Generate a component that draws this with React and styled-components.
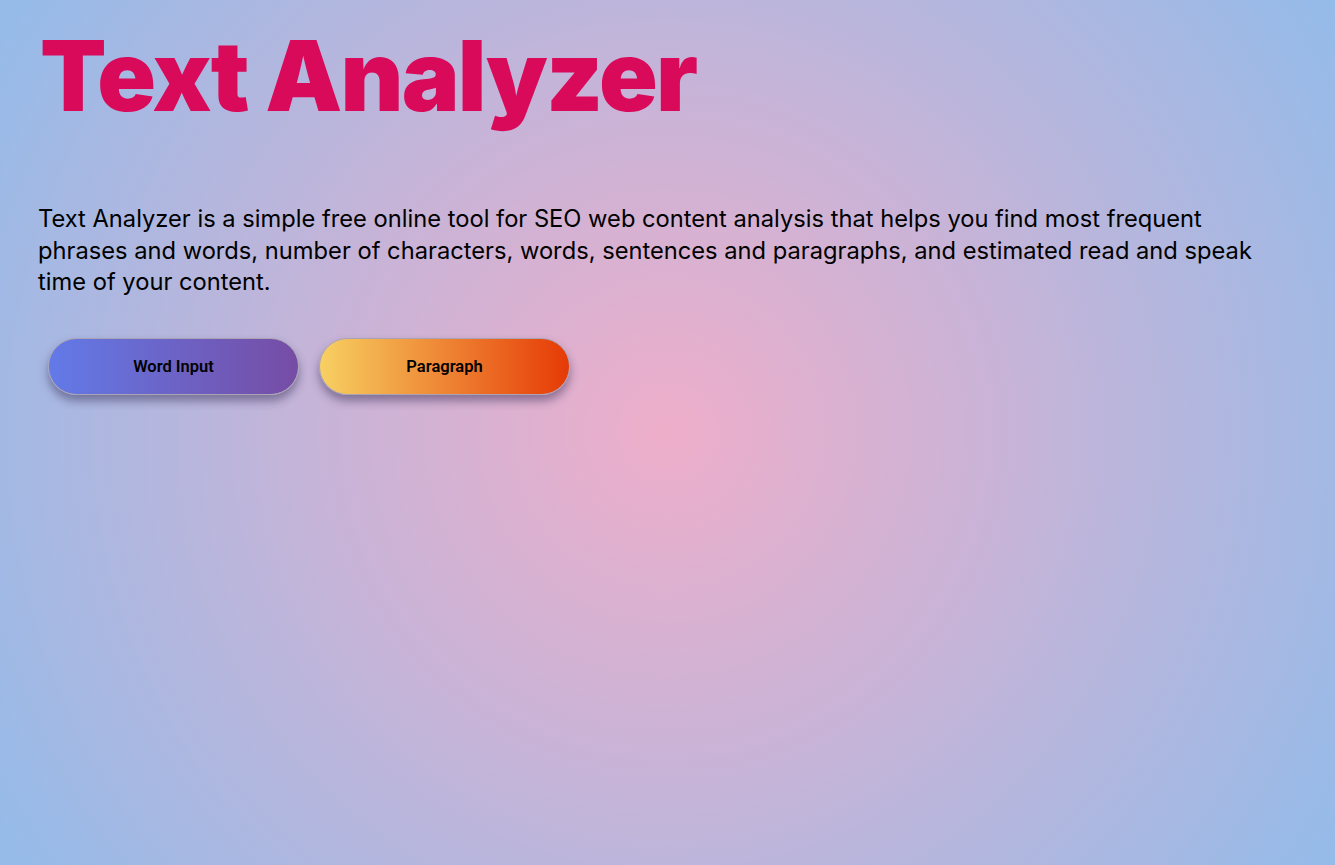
import React from "react"
import styled, { createGlobalStyle } from "styled-components"

const GlobalStyle = createGlobalStyle`
  html, body {
    margin: 0;
    padding: 0;
  }
  body {
    min-height: 100vh;
    background: radial-gradient(circle at 50% 50%, #eeaeca 0%, #94bbe9 100%);
    background-attachment: fixed;
    font-family: Inter, "Noto Sans", sans-serif;
  }
`

const Page = styled.main`
  min-height: 100vh;
  padding: 18px 38px;
  box-sizing: border-box;
`

const Title = styled.h1`
  margin: 0;
  padding-left: 2px;
  font-family: Inter, sans-serif;
  font-weight: 900;
  font-size: 97px;
  line-height: 1.2;
  letter-spacing: -1.8px;
  color: #d90a5a;
`

const Intro = styled.p`
  margin: 69px 0 0;
  max-width: 1240px;
  font-size: 23.7px;
  line-height: 31.5px;
  color: #000;
`

const ButtonRow = styled.div`
  display: flex;
  gap: 20px;
  margin-top: 40px;
  padding-left: 10px;
`

const Pill = styled.button`
  width: 251px;
  height: 57px;
  border-radius: 29px;
  border: 1px solid #a9a3b4;
  background: ${({ $from, $to }) => `linear-gradient(to right, ${$from}, ${$to})`};
  box-shadow: 0 6px 10px rgba(40, 30, 70, 0.45);
  font-family: Roboto, sans-serif;
  font-weight: 600;
  font-size: 16.5px;
  color: #000;
  cursor: pointer;
`

export default function App() {
  return (
    <>
      <GlobalStyle />
      <Page>
        <Title>Text Analyzer</Title>
        <Intro>
          Text Analyzer is a simple free online tool for SEO web content analysis that helps you find most frequent
          phrases and words, number of characters, words, sentences and paragraphs, and estimated read and speak
          time of your content.
        </Intro>
        <ButtonRow>
          <Pill $from="#627ae8" $to="#764ca4">Word Input</Pill>
          <Pill $from="#f7d062" $to="#e63a06">Paragraph</Pill>
        </ButtonRow>
      </Page>
    </>
  )
}
